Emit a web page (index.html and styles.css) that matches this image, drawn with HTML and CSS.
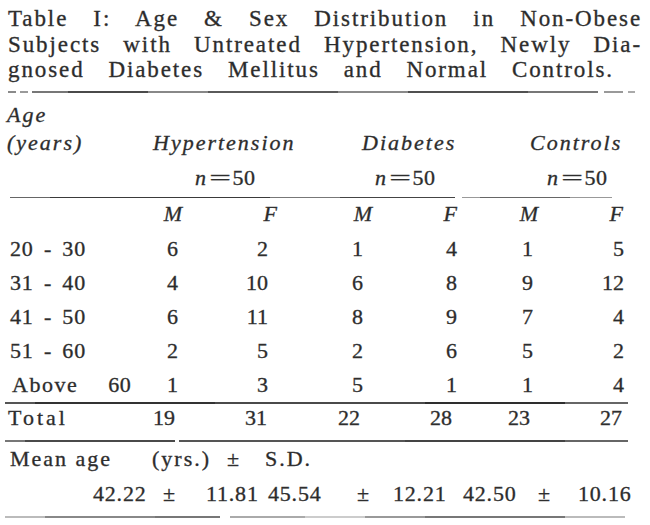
FILE: index.html
```html
<!DOCTYPE html>
<html lang="en">
<head>
<meta charset="utf-8">
<title>Table I: Age &amp; Sex Distribution</title>
<link rel="stylesheet" href="styles.css">
</head>
<body>
<div class="page">
  <div class="title">
    <div class="tline l1">Table I: Age &amp; Sex Distribution in Non-Obese</div>
    <div class="tline l2">Subjects with Untreated Hypertension, Newly Dia-</div>
    <div class="tline l3">gnosed Diabetes Mellitus and Normal Controls.</div>
  </div>
  <div class="rule rule-top"></div>

  <div class="hrow age-row"><span class="it">Age</span></div>
  <div class="hrow group-row">
    <span class="it g0">(years)</span>
    <span class="it g1">Hypertension</span>
    <span class="it g2">Diabetes</span>
    <span class="it g3">Controls</span>
  </div>
  <div class="hrow n-row">
    <span class="n n1"><i>n</i><span class="eq">=</span>50</span>
    <span class="n n2"><i>n</i><span class="eq">=</span>50</span>
    <span class="n n3"><i>n</i><span class="eq">=</span>50</span>
  </div>
  <div class="rule rule-mid"></div>

  <div class="grid sexrow">
    <span></span>
    <span class="it">M</span><span class="it">F</span>
    <span class="it">M</span><span class="it">F</span>
    <span class="it">M</span><span class="it">F</span>
  </div>

  <div class="body-rows">
    <div class="grid drow"><span class="lbl">20 - 30</span><span>6</span><span>2</span><span>1</span><span>4</span><span>1</span><span>5</span></div>
    <div class="grid drow"><span class="lbl">31 - 40</span><span>4</span><span>10</span><span>6</span><span>8</span><span>9</span><span>12</span></div>
    <div class="grid drow"><span class="lbl">41 - 50</span><span>6</span><span>11</span><span>8</span><span>9</span><span>7</span><span>4</span></div>
    <div class="grid drow"><span class="lbl">51 - 60</span><span>2</span><span>5</span><span>2</span><span>6</span><span>5</span><span>2</span></div>
    <div class="grid drow"><span class="lbl above">Above<span class="sixty">60</span></span><span>1</span><span>3</span><span>5</span><span>1</span><span>1</span><span>4</span></div>
  </div>
  <div class="rule rule-heavy"></div>

  <div class="grid trow"><span class="lbl total">Total</span><span>19</span><span>31</span><span>22</span><span>28</span><span>23</span><span>27</span></div>
  <div class="rule rule-total"></div>

  <div class="mean-row">
    <span class="m0">Mean age</span>
    <span class="m1">(yrs.)</span>
    <span class="m2">±</span>
    <span class="m3">S.D.</span>
  </div>
  <div class="val-row">
    <span class="v v1">42.22</span>
    <span class="v pm">±</span>
    <span class="v v2">11.81</span>
    <span class="v v3">45.54</span>
    <span class="v pm2">±</span>
    <span class="v v4">12.21</span>
    <span class="v v5">42.50</span>
    <span class="v pm3">±</span>
    <span class="v v6">10.16</span>
  </div>
  <div class="rule rule-bottom"></div>
</div>
</body>
</html>
```

FILE: styles.css
```css
html, body {
  margin: 0;
  padding: 0;
  background: #ffffff;
}

body {
  font-family: "Liberation Serif", "Times New Roman", serif;
  color: #2a2a2a;
  -webkit-text-stroke: 0.35px #3a3a3a;
  width: 650px;
  height: 525px;
  overflow: hidden;
}

.page {
  padding-top: 6px;
}

/* ---------- title ---------- */
.title {
  margin-left: 8px;
  font-size: 23px;
  line-height: 25.5px;
  letter-spacing: 1.9px;
}

.tline {
  white-space: nowrap;
  text-align: justify;
  text-align-last: justify;
}

.l1, .l2 { width: 634px; }
.l3 { width: 606px; }

/* ---------- rules ---------- */
.rule { height: 2px; }

.rule-top {
  margin-top: 8.5px;
  margin-left: 8px;
  width: 627px;
  height: 1.5px;
  background: linear-gradient(90deg,
    #8a8a8a 0 8px, transparent 8px 12px, #9a9a9a 12px 20px, transparent 20px 24px,
    #777 24px 60px, #4a4a4a 60px 140px, #888 140px 200px, #5a5a5a 200px 330px,
    #8a8a8a 330px 400px, #505050 400px 520px, #777 520px 590px,
    transparent 590px 596px, #999 596px 615px, transparent 615px 620px, #aaa 620px);
}

.rule-mid {
  margin-top: 5px;
  margin-left: 10px;
  width: 602px;
  height: 1.5px;
  background: linear-gradient(90deg,
    #666 0 40px, #3a3a3a 40px 260px, #777 260px 330px, #444 330px 445px,
    transparent 445px 452px, #999 452px 470px, #666 470px 560px, #999 560px);
}

.rule-heavy {
  margin-left: 5px;
  width: 623px;
  background: linear-gradient(90deg,
    #555 0 30px, #333 30px 210px, #4a4a4a 210px 420px, #2e2e2e 420px 560px, #666 560px);
}

.rule-total {
  margin-top: 8px;
  margin-left: 5px;
  width: 623px;
  background: linear-gradient(90deg,
    #777 0 20px, #4a4a4a 20px 170px, transparent 170px 174px, #555 174px 400px,
    #444 400px 560px, #666 560px);
}

.rule-bottom {
  margin-top: 8px;
  margin-left: 5px;
  width: 620px;
  height: 1.5px;
  background: linear-gradient(90deg,
    #bbb 0 40px, #888 40px 150px, #777 150px 215px, transparent 215px 225px,
    #aaa 225px 300px, #ccc 300px 360px, #999 360px 420px, #777 420px 560px, #bbb 560px);
}

/* ---------- header ---------- */
.it {
  font-style: italic;
}

.hrow {
  display: flex;
  font-size: 22px;
  line-height: 28px;
  height: 28px;
  letter-spacing: 2px;
  white-space: nowrap;
}

.age-row {
  margin-top: 8px;
  padding-left: 7px;
}

.group-row .g0 { margin-left: 7px; width: 146px; }
.group-row .g1 { width: 209px; }
.group-row .g2 { width: 168px; }
.group-row .g3 { width: 110px; }

.n-row {
  margin-top: 7px;
  letter-spacing: 0.5px;
}

.n { display: inline-block; }
.n1 { margin-left: 195px; width: 180px; }
.n2 { width: 172px; }
.n3 { width: 90px; }

.eq {
  display: inline-block;
  transform: scaleX(1.75);
  margin: 0 6px 0 7px;
}

/* ---------- grid rows ---------- */
.grid {
  display: grid;
  padding-left: 8px;
  font-size: 22px;
  white-space: nowrap;
}

.grid > span {
  text-align: right;
}

.grid > span.lbl {
  text-align: left;
}

.sexrow {
  margin-top: 2px;
  line-height: 28px;
  height: 28px;
  grid-template-columns: 124px 50px 95px 95px 85px 81px 85px;
}

.body-rows {
  margin-top: 4px;
}

.drow {
  line-height: 34px;
  height: 34px;
  grid-template-columns: 120px 50px 90px 95px 94px 76px 91px;
}

.lbl {
  padding-left: 2px;
  letter-spacing: 0.8px;
  word-spacing: 4px;
}

.above {
  padding-left: 4px;
  letter-spacing: 1.5px;
}

.sixty {
  margin-left: 30px;
  letter-spacing: 0.5px;
}

.trow {
  line-height: 28px;
  height: 28px;
  grid-template-columns: 117px 50px 92px 93px 92px 78px 92px;
}

.total {
  padding-left: 0;
  letter-spacing: 3px;
}

/* ---------- mean rows ---------- */
.mean-row, .val-row {
  display: flex;
  font-size: 22px;
  line-height: 28px;
  height: 28px;
  white-space: nowrap;
}

.mean-row {
  margin-top: 3px;
  letter-spacing: 2px;
}

.m0 { margin-left: 10px; width: 142px; }
.m1 { width: 75px; }
.m2 { width: 38px; }
.m3 { width: 70px; }

.val-row {
  margin-top: 7px;
  letter-spacing: 0.8px;
}

.v1 { margin-left: 93px; width: 70px; }
.pm { width: 43px; }
.v2 { width: 62px; }
.v3 { width: 89px; }
.pm2 { width: 36px; }
.v4 { width: 70px; }
.v5 { width: 75px; }
.pm3 { width: 40px; }
.v6 { width: 60px; }
```
